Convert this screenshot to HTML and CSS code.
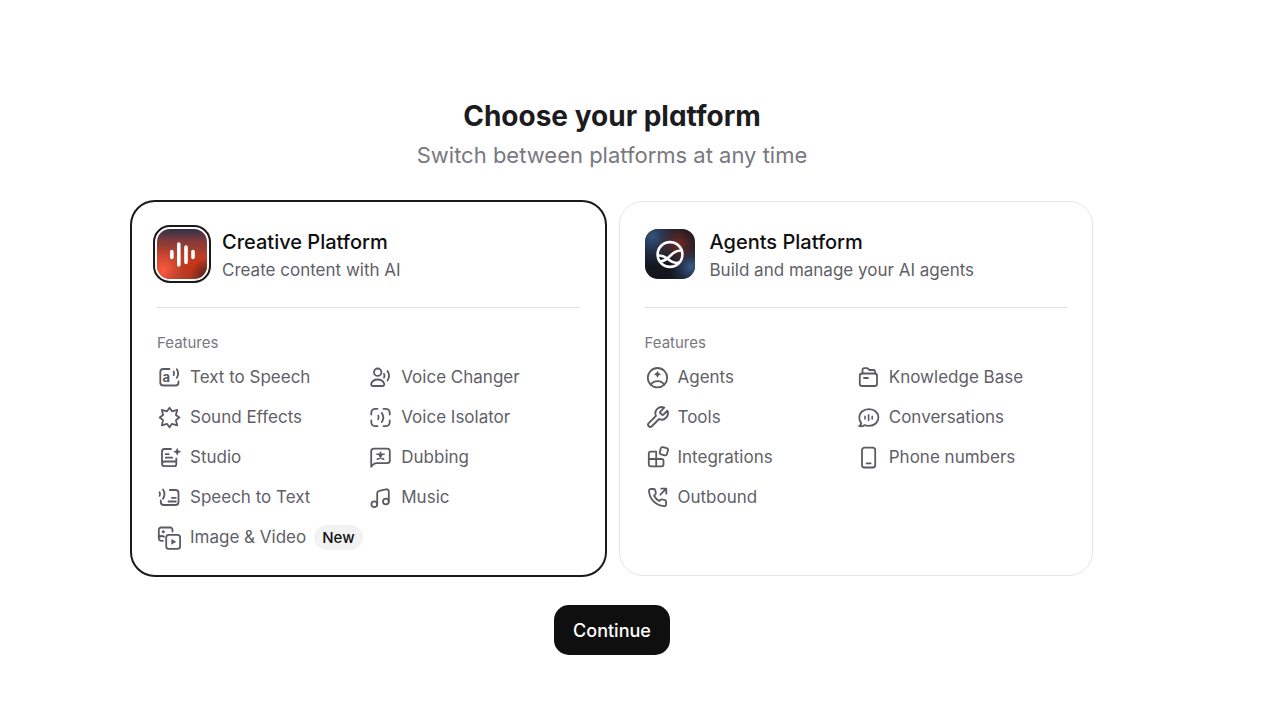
FILE: index.html
```html
<!DOCTYPE html>
<html lang="en">
<head>
    <meta charset="UTF-8">
    <meta name="viewport" content="width=device-width, initial-scale=1.0">
    <title>Choose your platform</title>
    <link rel="stylesheet" href="styles.css">
</head>
<body>
    <main class="page">
        <header class="intro">
            <h1>Choose your platform</h1>
            <p>Switch between platforms at any time</p>
        </header>

        <form class="platform-form">
            <div class="platforms">
                <label class="card">
                    <input class="card-radio" type="radio" name="platform" value="creative" checked>
                    <span class="card-header">
                        <svg class="logo" viewBox="0 0 50 50">
                            <defs>
                                <linearGradient id="redBase" x1="0" y1="0" x2="0" y2="1">
                                    <stop offset="0" stop-color="#30314a"/>
                                    <stop offset="0.25" stop-color="#873a38"/>
                                    <stop offset="0.55" stop-color="#b83f2a"/>
                                    <stop offset="1" stop-color="#a83a28"/>
                                </linearGradient>
                                <radialGradient id="redGlow" cx="0.12" cy="0.82" r="0.5">
                                    <stop offset="0" stop-color="#ff5c40"/>
                                    <stop offset="1" stop-color="#e04a30" stop-opacity="0"/>
                                </radialGradient>
                                <radialGradient id="redCore" cx="0.75" cy="0.75" r="0.35">
                                    <stop offset="0" stop-color="#c83412"/>
                                    <stop offset="1" stop-color="#c83412" stop-opacity="0"/>
                                </radialGradient>
                                <radialGradient id="redShade" cx="1" cy="0.95" r="0.35">
                                    <stop offset="0" stop-color="#4a2025"/>
                                    <stop offset="1" stop-color="#4a2025" stop-opacity="0"/>
                                </radialGradient>
                            </defs>
                            <rect width="50" height="50" fill="url(#redBase)"/>
                            <rect width="50" height="50" fill="url(#redGlow)"/>
                            <rect width="50" height="50" fill="url(#redCore)"/>
                            <rect width="50" height="50" fill="url(#redShade)"/>
                            <path d="M14.8 22.5v6M21.8 15v21M29 18v15.5M36 22.5v6" stroke="#fff" stroke-width="3.6" stroke-linecap="round"/>
                        </svg>
                        <span class="card-heading">
                            <span class="card-title">Creative Platform</span>
                            <span class="card-text">Create content with AI</span>
                        </span>
                    </span>
                    <span class="features-label">Features</span>
                    <span class="features">
                        <span class="feature">
                            <svg class="icon" viewBox="0 0 25 25"><path d="M12.5 4H6.300a3 3 0 0 0-3 3v10.500a3 3 0 0 0 3 3H18.500a3 3 0 0 0 3-3v-1"/><path d="M16.700 6.500a4 4 0 0 1 0 3.600M19.800 4.200a8 8 0 0 1 0 8.600"/><text class="icon-letter" x="5.500" y="17">a</text></svg>
                            Text to Speech
                        </span>
                        <span class="feature">
                            <svg class="icon" viewBox="0 0 25 25"><circle cx="9.700" cy="7.200" r="3.700"/><path d="M9.700 14.500c-3.400 0-5.700 1.700-6.500 4.200-.4 1.300.6 2.300 1.800 2.300h9.400c1.200 0 2.200-1 1.800-2.300-.8-2.500-3.100-4.200-6.500-4.200z"/><path d="M16 8.900a4 4 0 0 1 0 3.700M19.500 6a8.500 8.500 0 0 1 0 9.500"/></svg>
                            Voice Changer
                        </span>
                        <span class="feature">
                            <svg class="icon" viewBox="0 0 25 25"><path d="M12.500 2.800l2.500 3.500 5.200-1.500-1.300 5.200 3.400 2.500-3.400 2.600 1.300 5.200-5.200-1.500-2.500 3.500L10 18.800l-5.200 1.500 1.300-5.200-3.400-2.600L6.100 10 4.800 4.800 10 6.300z"/></svg>
                            Sound Effects
                        </span>
                        <span class="feature">
                            <svg class="icon" viewBox="0 0 25 25"><path d="M9.500 3.800H7.300a4 4 0 0 0-4 4V9.500M15.500 3.800h2.200a4 4 0 0 1 4 4V9.500M21.700 15.500v1.700a4 4 0 0 1-4 4H15.500M9.500 21.200H7.300a4 4 0 0 1-4-4V15.500"/><path d="M10.200 10.700a4 4 0 0 1 0 3.600M13.800 8a8 8 0 0 1 0 9"/></svg>
                            Voice Isolator
                        </span>
                        <span class="feature">
                            <svg class="icon" viewBox="0 0 25 25"><path d="M14 4H7.500A2.500 2.500 0 0 0 5 6.500V18.700a2.500 2.500 0 0 0 2.500 2.500H17.300a2 2 0 0 0 2-2V13.500M19.300 16.500H7.400A2.400 2.400 0 0 0 5 18.900M8.700 9.200h3M8.700 12.700h6.500"/><path class="solid" d="M20.200 2.800l1.200 2.800 2.800 1.200-2.800 1.200-1.200 2.800-1.200-2.800-2.800-1.200 2.800-1.200z"/></svg>
                            Studio
                        </span>
                        <span class="feature">
                            <svg class="icon" viewBox="0 0 25 25"><path d="M3.200 21.700V6.200A2.600 2.600 0 0 1 5.800 3.600H19.200a2.600 2.600 0 0 1 2.600 2.600V15.600a2.600 2.600 0 0 1-2.600 2.600H8.500c-2 0-3.600 1.200-5.300 3.500z"/><path class="thin" d="M12.500 7.200v1.500M8.900 9.200h7.200M9.300 14.200c2.400-.9 4-2.600 4.600-5M15.700 14.200c-2.400-.9-4-2.600-4.600-5"/></svg>
                            Dubbing
                        </span>
                        <span class="feature">
                            <svg class="icon" viewBox="0 0 25 25"><path d="M12.800 5H18.500a3 3 0 0 1 3 3v9a3 3 0 0 1-3 3H6.800a3 3 0 0 1-3-3v-1.500M14.800 12.800h4M11.500 16.500h7.300"/><path d="M2.600 7.300a4 4 0 0 1 0 3.600M6 4.500a8.500 8.500 0 0 1 0 9.200"/></svg>
                            Speech to Text
                        </span>
                        <span class="feature">
                            <svg class="icon" viewBox="0 0 25 25"><circle cx="6.300" cy="19.300" r="2.900"/><circle cx="17.900" cy="16.500" r="2.900"/><path d="M9.200 19.300V8.200a2.500 2.500 0 0 1 2-2.400l6.700-1.500a2.400 2.400 0 0 1 2.900 2.300v9.900"/></svg>
                            Music
                        </span>
                        <span class="feature">
                            <svg class="icon" viewBox="0 0 25 25"><path d="M5.800 15.800H4.300A2.500 2.500 0 0 1 1.800 13.300V5a2.500 2.500 0 0 1 2.500-2.500H13A2.500 2.500 0 0 1 15.500 5v1.500M2 12.200c1.700-1.400 3.400-1.500 5-.4"/><circle class="solid" cx="6.300" cy="6.700" r="1.500"/><rect x="9.200" y="9.900" width="13.900" height="13.900" rx="2.600"/><path class="solid" d="M14.400 13.900v5.800l4.800-2.900z"/></svg>
                            Image &amp; Video
                            <span class="badge">New</span>
                        </span>
                    </span>
                </label>

                <label class="card">
                    <input class="card-radio" type="radio" name="platform" value="agents">
                    <span class="card-header">
                        <svg class="logo" viewBox="0 0 50 50">
                            <defs>
                                <radialGradient id="blueTop" cx="0.15" cy="0.15" r="0.6">
                                    <stop offset="0" stop-color="#35547f"/>
                                    <stop offset="1" stop-color="#2a3c5c" stop-opacity="0"/>
                                </radialGradient>
                                <radialGradient id="blueSide" cx="0.92" cy="0.75" r="0.45">
                                    <stop offset="0" stop-color="#3b5c8c"/>
                                    <stop offset="1" stop-color="#2a3c5c" stop-opacity="0"/>
                                </radialGradient>
                                <radialGradient id="rust" cx="0.68" cy="0.3" r="0.45">
                                    <stop offset="0" stop-color="#742c22"/>
                                    <stop offset="1" stop-color="#4a282b" stop-opacity="0"/>
                                </radialGradient>
                            </defs>
                            <rect width="50" height="50" fill="#14161f"/>
                            <rect width="50" height="50" fill="url(#blueTop)"/>
                            <rect width="50" height="50" fill="url(#blueSide)"/>
                            <rect width="50" height="50" fill="url(#rust)"/>
                            <g fill="none" stroke="#fff" stroke-width="2.600" stroke-linecap="round">
                                <circle cx="25" cy="25.500" r="12.400"/>
                                <path d="M13 26.500c5.500-.5 8 2 11.500 4.800 3 2.400 6 3.300 9.500 2.200M37 21.500c-6-.2-9 2.500-12.500 6-3 3-5.500 4.500-9 4.700"/>
                            </g>
                        </svg>
                        <span class="card-heading">
                            <span class="card-title">Agents Platform</span>
                            <span class="card-text">Build and manage your AI agents</span>
                        </span>
                    </span>
                    <span class="features-label">Features</span>
                    <span class="features">
                        <span class="feature">
                            <svg class="icon" viewBox="0 0 25 25"><circle cx="12.500" cy="12.700" r="9.700"/><path d="M5.800 19.700c1.500-2.400 3.900-3.600 6.700-3.600s5.200 1.200 6.700 3.600"/><path class="solid" d="M12.500 5.700l1.200 2.400 2.400 1.200-2.400 1.200-1.200 2.400-1.200-2.400-2.400-1.200 2.400-1.200z"/></svg>
                            Agents
                        </span>
                        <span class="feature">
                            <svg class="icon" viewBox="0 0 25 25"><path d="M6.500 8.500V5A1.800 1.800 0 0 1 8.300 3.200h3.200L13.500 5h3.900a1.800 1.800 0 0 1 1.800 1.800v1.700"/><rect x="3.800" y="8.500" width="17.200" height="12.500" rx="2.300"/><path d="M8 13h4"/></svg>
                            Knowledge Base
                        </span>
                        <span class="feature">
                            <svg class="icon" viewBox="0 0 24 24"><path d="M14.700 6.300a1 1 0 0 0 0 1.400l1.600 1.600a1 1 0 0 0 1.400 0l3.770-3.770a6 6 0 0 1-7.940 7.940l-6.910 6.910a2.120 2.120 0 0 1-3-3l6.910-6.910a6 6 0 0 1 7.940-7.940l-3.760 3.760z"/></svg>
                            Tools
                        </span>
                        <span class="feature">
                            <svg class="icon" viewBox="0 0 25 25"><path d="M12.900 4.200c-5.600 0-9.600 3.400-9.600 8.300 0 2.300.7 4 1.800 5.300.2 1.400-.6 2.600-2 3.200 1.800.5 3.700.3 5.200-.8 1.400.5 3 .7 4.600.7 5.600 0 9.500-3.500 9.500-8.400s-3.900-8.300-9.500-8.300z"/><path class="thin" d="M9 11.200v2.800M12.600 9.700v5.800M16.200 11.200v2.800"/></svg>
                            Conversations
                        </span>
                        <span class="feature">
                            <svg class="icon" viewBox="0 0 25 25"><path d="M11.200 6.700H5.800A2 2 0 0 0 3.800 8.700V19.300a2 2 0 0 0 2 2H16.500a2 2 0 0 0 2-2V16a2 2 0 0 0-2-2H3.800M11.200 6.700V21.300"/><rect x="15.200" y="2.500" width="7.400" height="7.400" rx="1.800" transform="rotate(15 18.900 6.200)"/></svg>
                            Integrations
                        </span>
                        <span class="feature">
                            <svg class="icon" viewBox="0 0 25 25"><rect x="6" y="2.700" width="13.200" height="19.800" rx="2.600"/><path d="M10.600 18.400h4"/></svg>
                            Phone numbers
                        </span>
                        <span class="feature">
                            <svg class="icon" viewBox="0 0 25 25"><path d="M15.300 9.700l6-6M16.300 3.700h5v5"/><path d="M21.100 16.900v2.500a1.800 1.800 0 0 1-2 1.800C10.900 20.600 4.500 14.200 4 6a1.800 1.800 0 0 1 1.800-2H8.500a1.800 1.800 0 0 1 1.800 1.500l.5 2.300a1.800 1.800 0 0 1-.5 1.700L9 10.700a13 13 0 0 0 5.300 5.300l1.200-1.200a1.800 1.800 0 0 1 1.700-.4l2.400.6a1.800 1.800 0 0 1 1.500 1.900z"/></svg>
                            Outbound
                        </span>
                    </span>
                </label>
            </div>
            <button class="continue-button" type="button">Continue</button>
        </form>
    </main>
</body>
</html>
```

FILE: styles.css
```css
* {
    margin: 0;
    padding: 0;
    box-sizing: border-box;
}

body {
    background-color: #fff;
    color: #1c1c1f;
    font-family: Inter, "Liberation Sans", sans-serif;
}

.page {
    padding: 96px 57px 24px 0;
}

.intro {
    text-align: center;
    margin-bottom: 30px;
}

.intro h1 {
    font-size: 28px;
    line-height: 40px;
    font-weight: 700;
    font-feature-settings: "cv11";
}

.intro p {
    margin-top: 4px;
    font-size: 22px;
    line-height: 31px;
    color: #78787f;
}

.platform-form {
    display: flex;
    flex-direction: column;
    align-items: center;
    gap: 29px;
}

.platforms {
    display: grid;
    grid-template-columns: 1fr 1fr;
    gap: 13px;
    width: 100%;
    max-width: 962px;
}

.card {
    display: flex;
    flex-direction: column;
    padding: 27px 25px 25px;
    border: 1px solid #e5e5e7;
    border-radius: 24px;
    cursor: pointer;
}

.card-radio {
    position: absolute;
    opacity: 0;
}

.card:has(.card-radio:checked) {
    border-color: transparent;
    outline: 2px solid #1a1a1c;
    outline-offset: -1px;
}

.card-header {
    display: flex;
    align-items: flex-start;
    gap: 15px;
    padding-bottom: 22px;
    border-bottom: 1px solid #e1e1e3;
}

.logo {
    width: 50px;
    height: 50px;
    border-radius: 13px;
}

.card-radio:checked + .card-header .logo {
    outline: 2px solid #1a1a1c;
    outline-offset: 2px;
}

.card-heading {
    display: flex;
    flex-direction: column;
}

.card-title {
    font-size: 20px;
    line-height: 26px;
    font-weight: 500;
    color: #0f0f10;
}

.card-text {
    font-size: 17px;
    line-height: 30px;
    color: #5f5f68;
}

.features-label {
    margin: 25px 0 12px;
    font-size: 15px;
    line-height: 20px;
    color: #78787f;
}

.features {
    display: grid;
    grid-template-columns: 1fr 1fr;
    row-gap: 15px;
}

.feature {
    display: flex;
    align-items: center;
    gap: 8px;
    font-size: 17px;
    line-height: 25px;
    color: #5f5f68;
    white-space: nowrap;
}

.icon {
    width: 25px;
    height: 25px;
    flex-shrink: 0;
    fill: none;
    stroke: #5a5a63;
    stroke-width: 1.8;
    stroke-linecap: round;
    stroke-linejoin: round;
}

.icon .solid {
    fill: #5a5a63;
    stroke: none;
}

.icon .thin {
    stroke-width: 1.6;
}

.icon-letter {
    fill: #5a5a63;
    stroke: none;
    font-size: 13px;
    font-weight: 700;
}

.badge {
    padding: 0 8px;
    border-radius: 13px;
    background-color: #f2f2f3;
    color: #0f0f10;
    font-size: 15px;
    font-weight: 500;
}

.continue-button {
    padding: 0 19px;
    height: 50px;
    border: none;
    border-radius: 15px;
    background-color: #0f0f10;
    color: #fff;
    font-family: inherit;
    font-size: 18px;
    font-weight: 500;
    cursor: pointer;
}
```
